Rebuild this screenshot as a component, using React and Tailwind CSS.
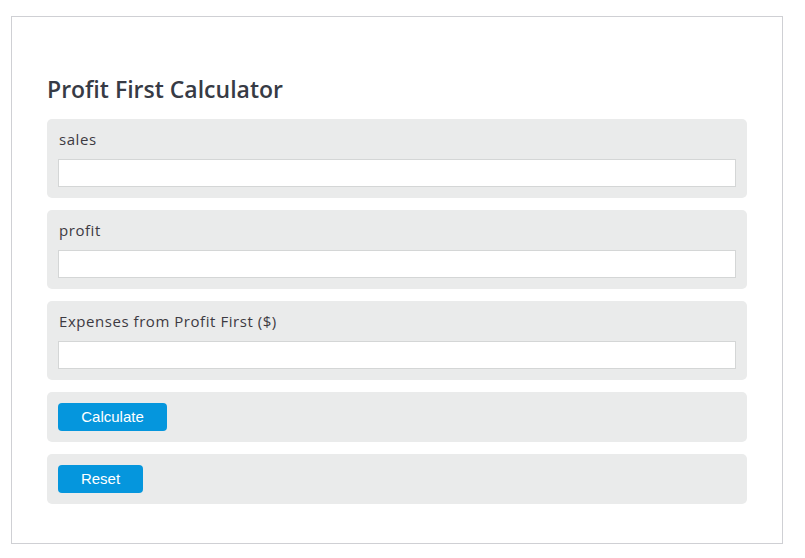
export default function App() {
  const fields = ["sales", "profit", "Expenses from Profit First ($)"];
  return (
    <div className="bg-white min-h-[558px] pt-[16px] pl-[11px]">
      <div className="w-[772px] h-[528px] border border-[#cfd0d4] px-[35px] pt-[56px]" style={{ fontFamily: '"Open Sans", sans-serif' }}>
        <h1 className="text-[23px] font-semibold text-[#373b45] leading-[32px] mb-[14px]">Profit First Calculator</h1>
        <div className="flex flex-col gap-[12px]">
          {fields.map((f) => (
            <div key={f} className="bg-[#eaebeb] rounded-[5px] px-[11px] pt-[10px] pb-[11px]">
              <div className="text-[15px] text-[#3d3a42] leading-[20px] mb-[10px] pl-[1px] tracking-[0.55px]">{f}</div>
              <input className="block w-full h-[28px] bg-white border border-[#d4d6d6] outline-none" />
            </div>
          ))}
          {["Calculate", "Reset"].map((b) => (
            <div key={b} className="bg-[#eaebeb] rounded-[5px] p-[11px]">
              <button className={`block h-[28px] rounded-[4px] bg-[#0596dd] text-white text-[15px] leading-[28px] ${b === "Calculate" ? "w-[109px]" : "w-[85px]"}`} style={{ fontFamily: '"Liberation Sans", Arial, sans-serif' }}>{b}</button>
            </div>
          ))}
        </div>
      </div>
    </div>
  );
}
